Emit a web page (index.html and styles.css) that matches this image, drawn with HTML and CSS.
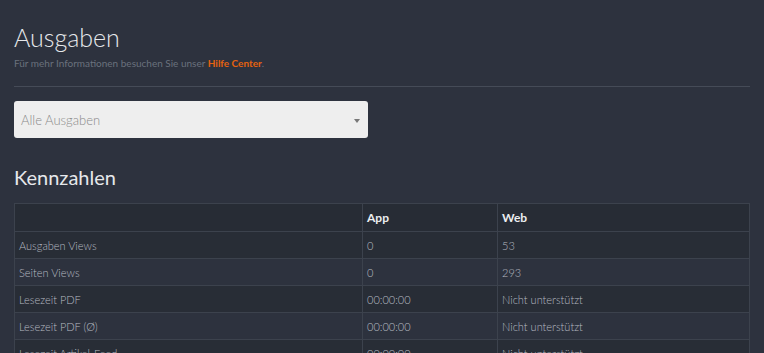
FILE: index.html
```html
<!DOCTYPE html>
<html lang="de">
<head>
<meta charset="utf-8">
<link rel="stylesheet" href="styles.css">
</head>
<body>
<div class="page">
  <header class="head">
    <h1 class="title">Ausgaben</h1>
    <p class="sub">Für mehr Informationen besuchen Sie unser <a class="link" href="#">Hilfe Center</a>.</p>
  </header>
  <div class="select">
    <span class="select-text">Alle Ausgaben</span>
    <span class="caret"></span>
  </div>
  <h2 class="section">Kennzahlen</h2>
  <table class="stats">
    <thead>
      <tr><th class="c1"></th><th class="c2">App</th><th class="c3">Web</th></tr>
    </thead>
    <tbody>
      <tr><td>Ausgaben Views</td><td>0</td><td>53</td></tr>
      <tr><td>Seiten Views</td><td>0</td><td>293</td></tr>
      <tr><td>Lesezeit PDF</td><td>00:00:00</td><td>Nicht unterstützt</td></tr>
      <tr><td>Lesezeit PDF (Ø)</td><td>00:00:00</td><td>Nicht unterstützt</td></tr>
      <tr><td>Lesezeit Artikel-Feed</td><td>00:00:00</td><td>Nicht unterstützt</td></tr>
    </tbody>
  </table>
</div>
</body>
</html>
```

FILE: styles.css
```css
html, body {
  margin: 0;
  padding: 0;
  background: #2d323e;
  font-family: Lato, "Open Sans", sans-serif;
  color: #c4c8ce;
  overflow: hidden;
}
.page {
  padding: 0 14px 0 14px;
}
.head {
  padding-top: 22px;
  padding-bottom: 17px;
  border-bottom: 1px solid #454b57;
}
.title {
  margin: 0;
  font-size: 25px;
  font-weight: 300;
  line-height: 30px;
  color: #e6e8eb;
}
.sub {
  margin: 5px 0 0 0;
  font-size: 10px;
  line-height: 12px;
  color: #6a717d;
}
.link {
  color: #e5620f;
  text-decoration: none;
  font-weight: 700;
}
.select {
  margin-top: 14px;
  width: 354px;
  height: 37px;
  box-sizing: border-box;
  background: #eeeeee;
  border-radius: 3px;
  display: flex;
  align-items: center;
  justify-content: space-between;
  padding: 0 8px 0 7px;
}
.select-text {
  font-size: 13px;
  font-weight: 300;
  color: #8a8a8a;
}
.caret {
  width: 0;
  height: 0;
  border-left: 3px solid transparent;
  border-right: 3px solid transparent;
  border-top: 4px solid #777;
  margin-top: 2px;
}
.section {
  margin: 27px 0 0 0;
  font-size: 20px;
  font-weight: 400;
  line-height: 24px;
  color: #e6e8eb;
}
.stats {
  margin-top: 14px;
  width: 736px;
  border-collapse: collapse;
  border: 1px solid #3c424d;
  font-size: 11px;
}
.stats th, .stats td {
  border: 1px solid #3c424d;
  height: 26px;
  padding: 0 4px;
  text-align: left;
  font-weight: 300;
  color: #b6bac1;
}
.stats th {
  font-weight: 700;
  font-size: 12px;
  color: #eceef0;
  height: 27px;
  background: #272c35;
}
.stats tbody tr:nth-child(odd) td {
  background: #282d36;
}
.c1 { width: 339px; }
.c2 { width: 126px; }
```
